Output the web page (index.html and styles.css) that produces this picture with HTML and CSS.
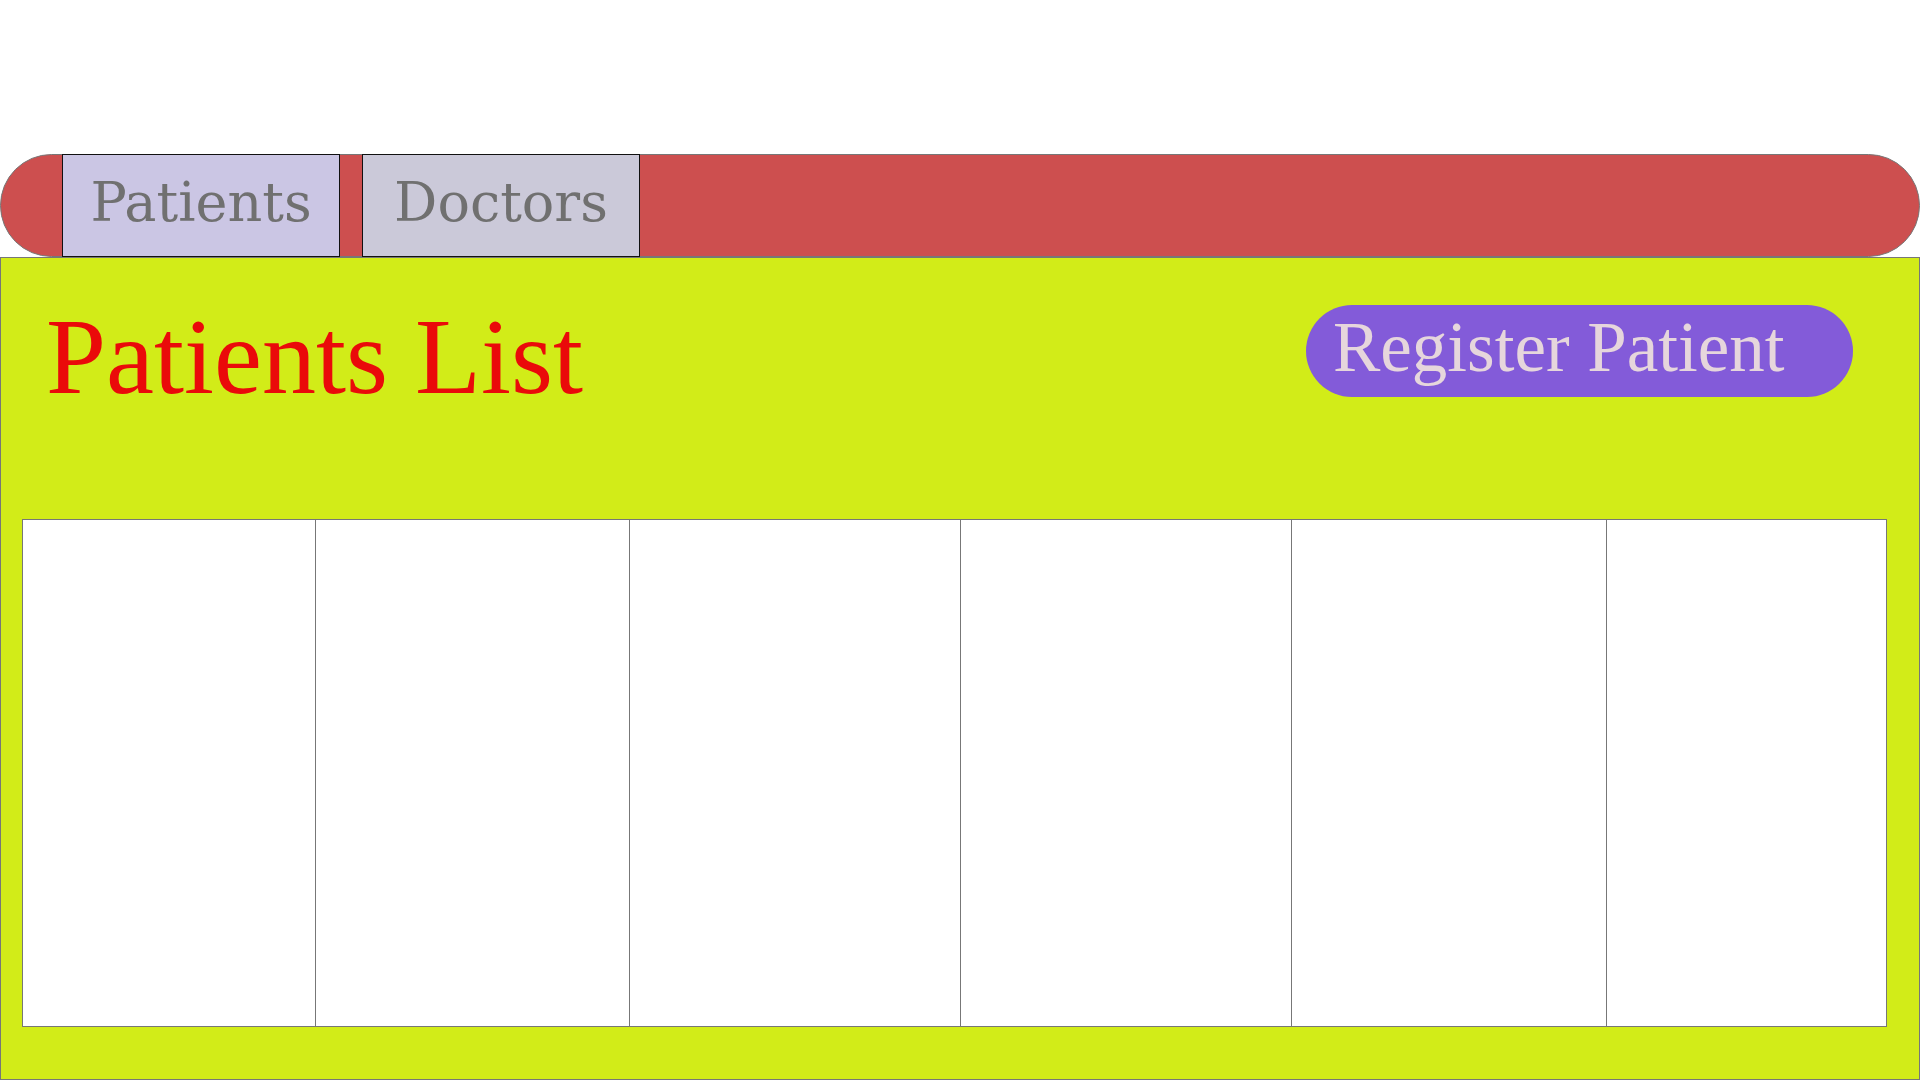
FILE: index.html
```html
<!DOCTYPE html>
<html>
<head>
<meta charset="utf-8">
<link rel="stylesheet" href="styles.css">
</head>
<body>
<nav class="nav">
  <a class="tab tab-patients">Patients</a>
  <a class="tab tab-doctors">Doctors</a>
</nav>
<main class="main">
  <div class="head">
    <h1 class="title">Patients List</h1>
    <button class="register">Register Patient</button>
  </div>
  <div class="table">
    <div class="cell c1"></div>
    <div class="cell c2"></div>
    <div class="cell c3"></div>
    <div class="cell c4"></div>
    <div class="cell c5"></div>
    <div class="cell c6"></div>
  </div>
</main>
</body>
</html>
```
FILE: styles.css
```css
html, body { margin: 0; padding: 0; background: #fff; }
body { font-family: "DejaVu Serif", serif; padding-top: 154px; }
.nav {
  height: 103px; box-sizing: border-box;
  background: #cd4f4f; border: 1px solid #777; border-radius: 52px;
  display: flex; gap: 22px; padding-left: 61px;
}
.tab {
  width: 278px; box-sizing: border-box; margin: -1px 0;
  border: 1px solid #111; display: flex; align-items: center; justify-content: center;
  font-family: "DejaVu Serif", serif; font-size: 54px; color: #707070; line-height: 1;
  padding-bottom: 6px;
}
.tab-patients { background: #cbc6e4; }
.tab-doctors { background: #cbc9d9; }
.main {
  height: 823px; box-sizing: border-box;
  background: #d2ec18; border: 1px solid #777;
  padding: 0 32px 0 21px;
}
.head {
  display: flex; justify-content: space-between; align-items: flex-start;
  height: 261px; padding-right: 34px;
}
.title {
  margin: 37px 0 0 24px; font-family: "Liberation Serif", "Times New Roman", serif;
  font-size: 108px; font-weight: normal; color: #ea0a0a; line-height: 1.15;
}
.register {
  margin-top: 47px; width: 547px; height: 92px; border: none; border-radius: 46px;
  background: #835bd9; color: #e6d6dc;
  font-family: "Liberation Serif", "Times New Roman", serif;
  font-size: 71px; line-height: 1; padding: 0 0 7px 27px;
  display: flex; align-items: center; justify-content: flex-start; box-sizing: border-box;
}
.table {
  display: grid; grid-template-columns: 292px 314px 331px 331px 315px 1fr;
  height: 508px; border: 1px solid #777; box-sizing: border-box; background: #fff;
}
.cell { border-left: 1px solid #777; }
.c1 { border-left: none; }
```
